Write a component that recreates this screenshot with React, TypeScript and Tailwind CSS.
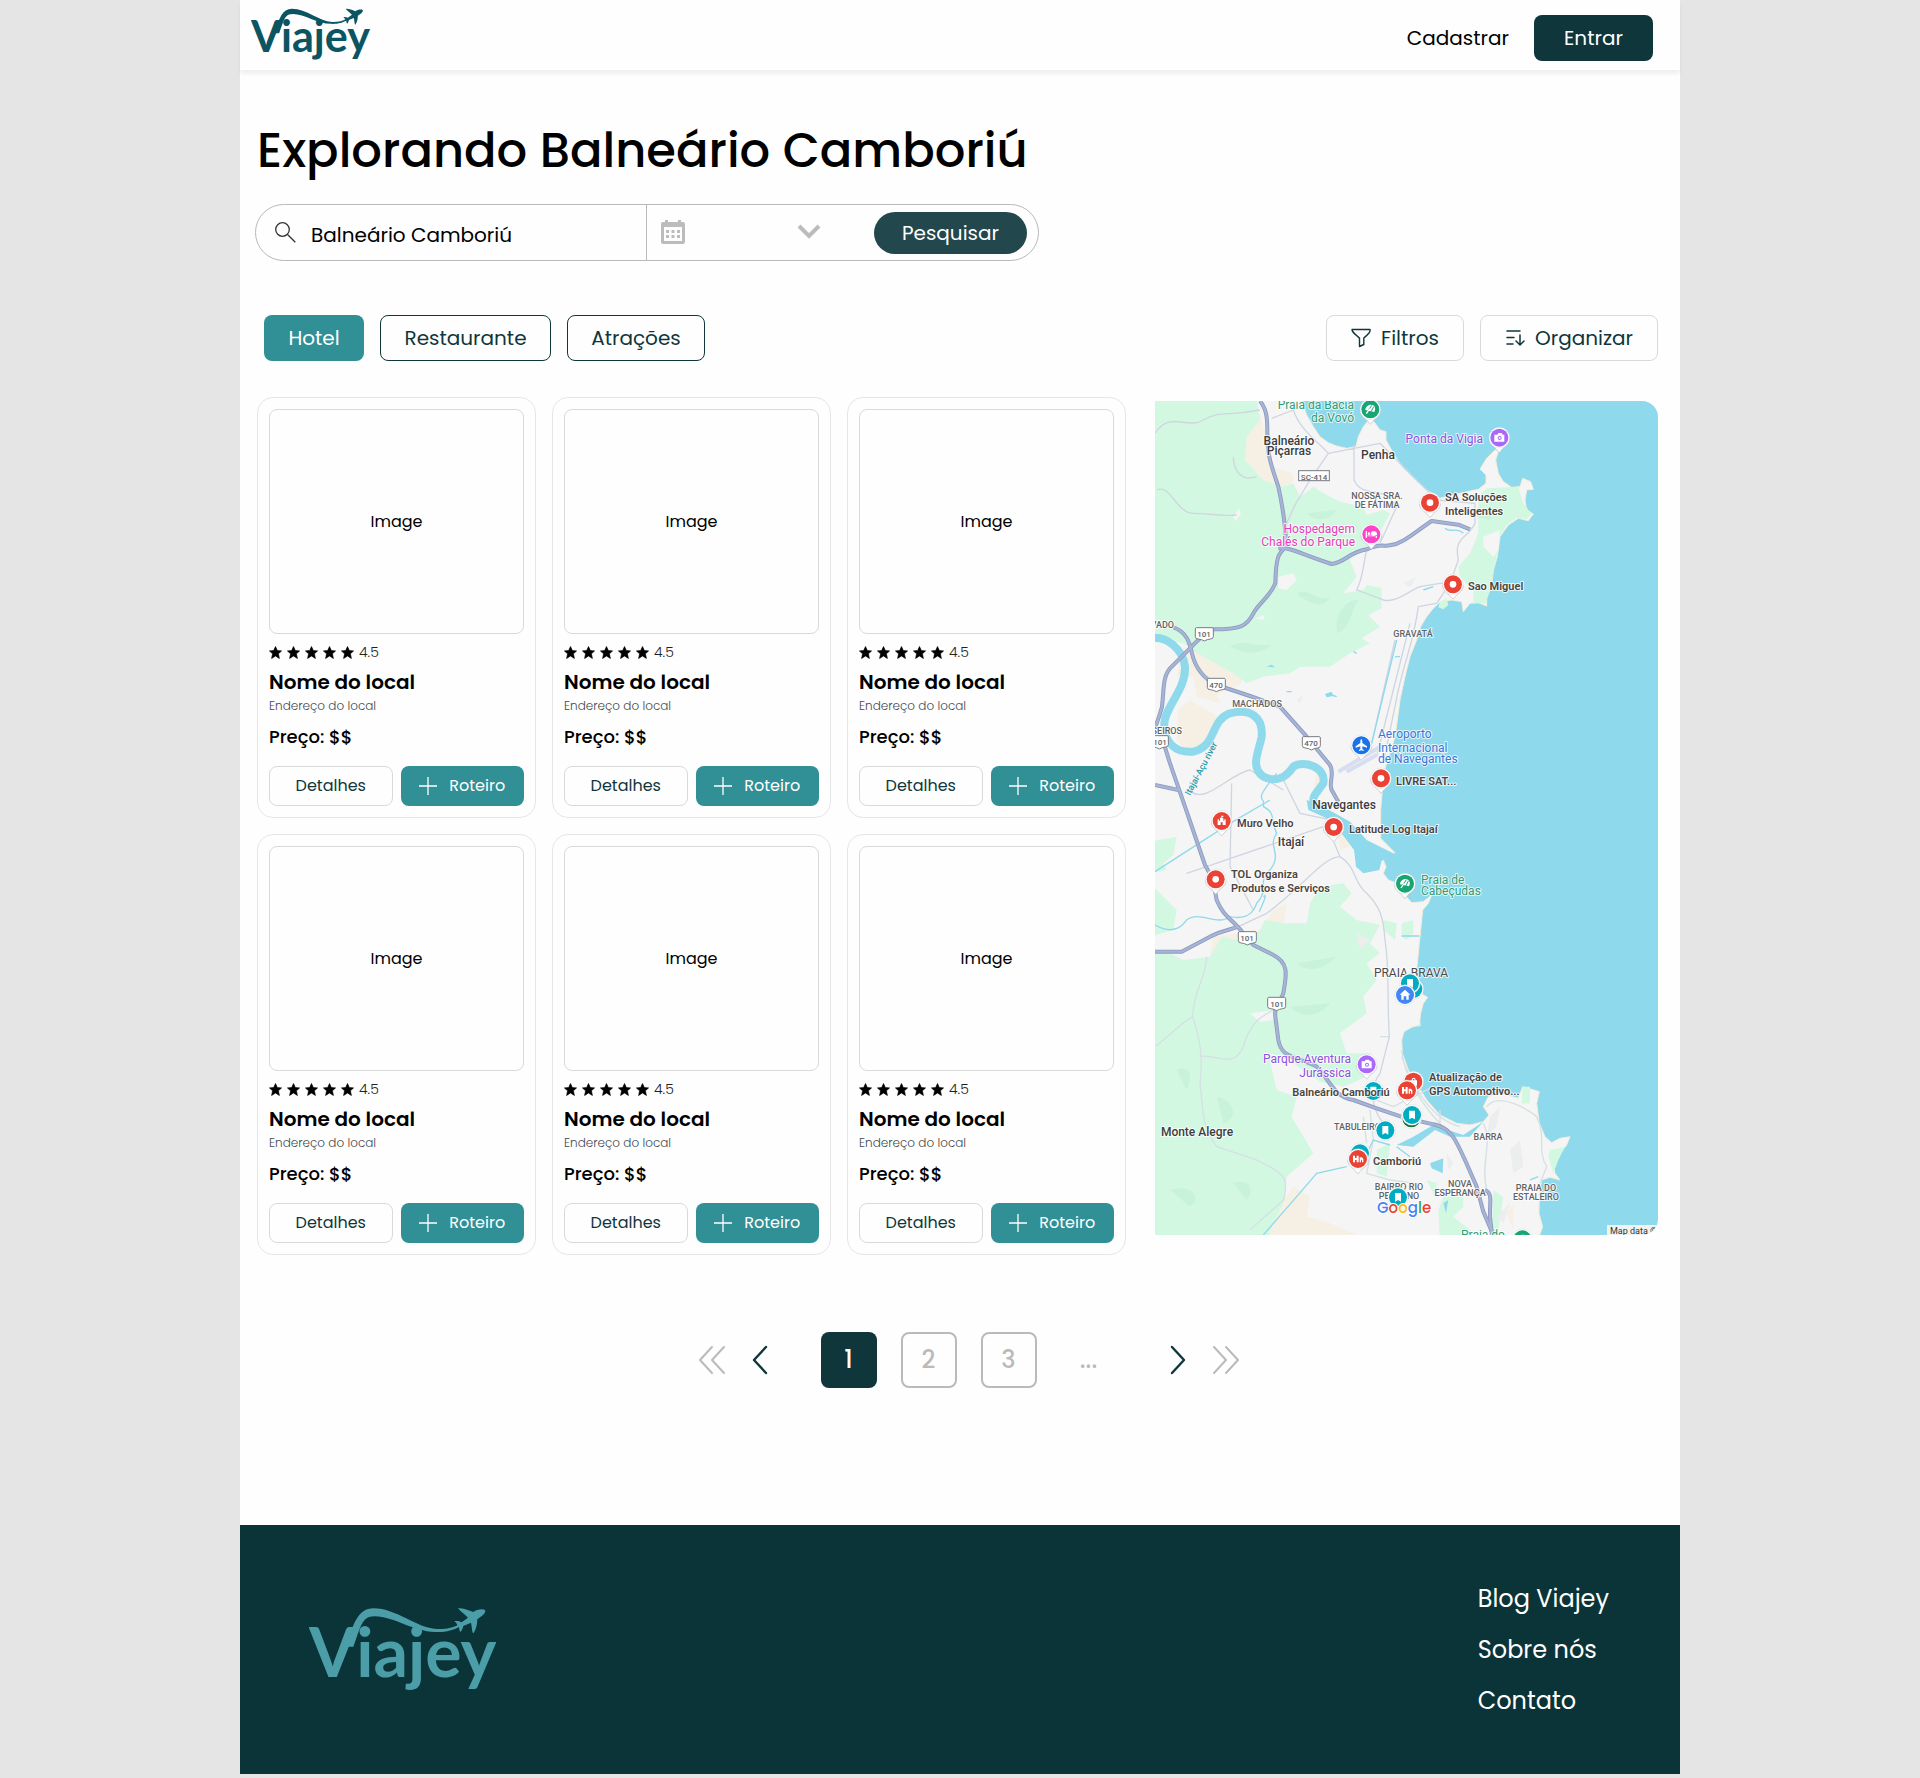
import React from "react";

const ui = "font-['Poppins','Inter',sans-serif]";

function Logo({ className }: { className: string }) {
  return (
    <svg viewBox="0 0 189 86" className={className} role="img" aria-label="Viajey" fill="currentColor">
      <text x="0" y="70" fontSize="68" fontWeight="700" fontFamily="Lato, sans-serif">
        Viajey
      </text>
      <g transform="scale(0.3333) translate(-57 -81)">
        <path d="M168 200C190 130 205 85 250 85C320 85 380 145 440 147C470 148 490 142 505 134L508 140C490 150 470 157 435 156C370 155 310 109 255 109C226 109 218 122 204 160L190 200Z" />
        <path d="M585 90C588 96 582 104 572 110L562 118C562 135 558 150 550 160C546 158 546 140 543 128L520 138C518 145 516 152 511 156C508 150 508 145 506 140L499 141L502 134C500 130 497 127 493 124C500 122 508 124 515 127L534 113C525 103 512 95 504 85C515 83 535 90 550 96C560 88 578 86 585 90Z" />
      </g>
    </svg>
  );
}

function Star() {
  return (
    <svg viewBox="0 0 12 12" className="size-[13px]" fill="#000" stroke="#000" strokeWidth="0.6" strokeLinejoin="round" aria-hidden="true">
      <path d="M6 0.500L7.700 4.200L11.600 4.500L8.700 7.200L9.600 11.500L6 9.200L2.400 11.500L3.300 7.200L0.400 4.500L4.300 4.200Z" />
    </svg>
  );
}

function PlaceCard() {
  return (
    <article className="flex flex-col rounded-2xl border border-[#e6e6e6] p-[11px]">
      <div className="flex h-[225px] items-center justify-center rounded-lg border border-[#d9d9d9] text-base text-black">
        Image
      </div>
      <div className="mt-2 flex h-5 items-center gap-[5px]">
        {[0, 1, 2, 3, 4].map((n) => (
          <Star key={n} />
        ))}
        <span className="text-sm leading-5 font-light text-[#222]">4.5</span>
      </div>
      <h2 className="mt-1.5 text-xl leading-7 font-semibold text-black">Nome do local</h2>
      <p className="mt-0.5 text-xs leading-4 font-light text-[#444a50]">Endereço do local</p>
      <p className="mt-[11px] text-lg leading-6 font-medium text-black">Preço: $$</p>
      <div className="mt-[17px] grid grid-cols-2 gap-2">
        <button className="h-10 rounded-lg border border-[#d9d9d9] text-base text-[#0f363b]">Detalhes</button>
        <button className="flex h-10 items-center justify-center gap-3 rounded-lg bg-[#318f96] text-base text-white">
          <svg viewBox="0 0 18 18" className="size-[18px]" stroke="currentColor" strokeWidth="1.3" aria-hidden="true">
            <path d="M9 0V18M0 9H18" />
          </svg>
          Roteiro
        </button>
      </div>
    </article>
  );
}

type Glyph = "dot" | "umbrella" | "bed" | "camera" | "plane" | "castle" | "bookmark" | "home" | "city" | "bag" | "none";

const glyphs: Record<Glyph, React.ReactNode> = {
  none: null,
  dot: <circle r="10" fill="#fff" />,
  umbrella: (
    <g fill="none" stroke="#fff" strokeWidth="4">
      <path d="M-15 2C-14 -10 -2 -17 9 -12C15 -8 16 0 12 8L-15 2Z" fill="#fff" stroke="none" />
      <path d="M-3 -3L-13 14M4 -12L-6 4M10 -8L3 6" stroke="#17a673" strokeWidth="3" />
      <path d="M-2 -2L-12 13" />
    </g>
  ),
  bed: (
    <g fill="#fff">
      <path d="M-17 -10H-13V4H13V-2C13 -5 11 -6 8 -6H-1V2H-13V10H-17ZM17 10H13V5H17ZM13 6H-15V3H17V-1C17 -6 14 -9 9 -9H1V3Z" />
      <circle cx="-7" cy="-2" r="4" />
    </g>
  ),
  camera: (
    <g>
      <path d="M-15 -9H-6L-3 -14H7L10 -9H15V12H-15Z" fill="#fff" />
      <circle cx="1" cy="1" r="6" fill="#a968f7" />
      <circle cx="1" cy="1" r="3" fill="#fff" />
    </g>
  ),
  plane: <path d="M0 -18C3 -18 3 -12 3 -7L17 3V7L3 3V11L7 14V17L0 15L-7 17V14L-3 11V3L-17 7V3L-3 -7C-3 -12 -3 -18 0 -18Z" fill="#fff" />,
  castle: <path d="M-12 12V-5H-8V-1H-5V-10H-1V-16H5V-12H1V-10H5V-1H8V-5H12V12H3V4H-3V12Z" fill="#fff" />,
  bookmark: <path d="M-9 -13H9V13L0 8L-9 13Z" fill="#fff" />,
  home: <path d="M0 -16L16 -1H11V14H4V4H-4V14H-11V-1H-16Z" fill="#fff" />,
  city: <path d="M-15 -10H-9V-3H-4V-10H2V10H-4V3H-9V10H-15ZM5 -5H12L16 0V10H12V2H9V10H5Z" fill="#fff" />,
  bag: <path d="M-9 -4H-5C-5 -14 7 -14 7 -4H11V12H-9ZM-2 -4H4C4 -9 -2 -9 -2 -4Z" fill="#fff" />,
};

type PinData = [number, number, string, Glyph, boolean];

const pinsBelowLabels: PinData[] = [[670, 2103, "#00acc1", "bookmark", false]];

const pins: PinData[] = [
  [661, 58, "#17a673", "umbrella", true],
  [664, 433, "#fb44c8", "bed", true],
  [1048, 143, "#a968f7", "camera", true],
  [840, 338, "#ea4335", "dot", true],
  [909, 583, "#ea4335", "dot", true],
  [634, 1066, "#1a73e8", "plane", true],
  [693, 1165, "#ea4335", "dot", true],
  [551, 1311, "#ea4335", "dot", true],
  [215, 1293, "#ea4335", "castle", true],
  [197, 1468, "#ea4335", "dot", true],
  [765, 1481, "#17a673", "umbrella", true],
  [790, 1797, "#00acc1", "none", false],
  [780, 1780, "#00acc1", "bookmark", false],
  [765, 1815, "#4285f4", "home", false],
  [650, 2023, "#a968f7", "camera", true],
  [790, 2075, "#ea4335", "bag", true],
  [771, 2101, "#ea4335", "city", true],
  [784, 2185, "#0d7033", "none", false],
  [786, 2175, "#00acc1", "bookmark", false],
  [706, 2221, "#00acc1", "bookmark", false],
  [630, 2290, "#00acc1", "none", false],
  [624, 2307, "#ea4335", "city", true],
  [744, 2422, "#00acc1", "bookmark", false],
  [1117, 2548, "#17a673", "umbrella", true],
];

function Pins({ items }: { items: PinData[] }) {
  return (
    <g transform="translate(-5 -11) scale(0.33333)">
      {items.map(([x, y, color, glyph, tail]) => (
        <g key={`${x}-${y}`} transform={`translate(${x} ${y})`}>
          {tail && <path d="M-31 4C-30 24 -12 26 -3 42Q0 46 3 42C12 26 30 24 31 4Z" fill="#fff" stroke="#b9bcc2" strokeWidth="2" />}
          <circle r="31" fill="#fff" stroke="#c9ccd1" strokeWidth="1" />
          <circle r="27" fill={color} />
          {glyphs[glyph]}
        </g>
      ))}
    </g>
  );
}

type Anchor = "start" | "middle" | "end";
// text, x, baseline, size, weight, colour, anchor
const labels: [string, number, number, number, number, string, Anchor][] = [
  ["Praia da Bacia", 612, 58, 12, 400, "#2f9d72", "end"],
  ["da Vovó", 612, 96, 12, 400, "#2f9d72", "end"],
  ["Balneário", 418, 164, 12, 500, "#3c3c3f", "middle"],
  ["Piçarras", 418, 196, 12, 500, "#3c3c3f", "middle"],
  ["Penha", 685, 208, 12, 500, "#3c3c3f", "middle"],
  ["NOSSA SRA.", 681, 326, 9, 500, "#5f6368", "middle"],
  ["DE FÁTIMA", 681, 353, 9, 500, "#5f6368", "middle"],
  ["Hospedagem", 616, 430, 12, 400, "#e93bbd", "end"],
  ["Chalés do Parque", 616, 467, 12, 400, "#e93bbd", "end"],
  ["Ponta da Vigia", 1000, 158, 12, 400, "#8f50e0", "end"],
  ["SA Soluções", 886, 332, 11, 600, "#4a4441", "start"],
  ["Inteligentes", 886, 374, 11, 600, "#4a4441", "start"],
  ["Sao Miguel", 955, 601, 11, 600, "#4a4441", "start"],
  ["GRAVATÁ", 788, 742, 9, 500, "#5f6368", "middle"],
  ["VADO", 72, 715, 9, 500, "#5f6368", "end"],
  ["MACHADOS", 320, 950, 9, 500, "#5f6368", "middle"],
  ["SEIROS", 97, 1032, 9, 500, "#5f6368", "end"],
  ["Aeroporto", 684, 1044, 12, 400, "#3a75d8", "start"],
  ["Internacional", 684, 1086, 12, 400, "#3a75d8", "start"],
  ["de Navegantes", 684, 1118, 12, 400, "#3a75d8", "start"],
  ["LIVRE SAT...", 739, 1186, 11, 600, "#4a4441", "start"],
  ["Navegantes", 582, 1256, 12, 500, "#3c3c3f", "middle"],
  ["Muro Velho", 262, 1310, 11, 600, "#4a4441", "start"],
  ["Latitude Log Itajaí", 598, 1329, 11, 600, "#4a4441", "start"],
  ["Itajaí", 423, 1368, 12, 500, "#3c3c3f", "middle"],
  ["TOL Organiza", 244, 1465, 11, 600, "#4a4441", "start"],
  ["Produtos e Serviços", 244, 1505, 11, 600, "#4a4441", "start"],
  ["Praia de", 814, 1483, 12, 400, "#2f9d72", "start"],
  ["Cabeçudas", 814, 1515, 12, 400, "#2f9d72", "start"],
  ["PRAIA BRAVA", 782, 1761, 12, 400, "#4a4a4d", "middle"],
  ["Parque Aventura", 603, 2020, 12, 400, "#8f50e0", "end"],
  ["Jurássica", 603, 2062, 12, 400, "#8f50e0", "end"],
  ["Balneário Camboriú", 572, 2118, 11, 600, "#4a4441", "middle"],
  ["Atualização de", 838, 2073, 11, 600, "#4a4441", "start"],
  ["GPS Automotivo...", 838, 2116, 11, 600, "#4a4441", "start"],
  ["TABULEIRO", 553, 2219, 9, 500, "#5f6368", "start"],
  ["BARRA", 1014, 2251, 9, 500, "#5f6368", "middle"],
  ["Monte Alegre", 142, 2238, 12, 500, "#3c3c3f", "middle"],
  ["Camboriú", 670, 2326, 11, 600, "#4a4441", "start"],
  ["BAIRRO RIO", 748, 2400, 9, 500, "#5f6368", "middle"],
  ["PEQUENO", 748, 2426, 9, 500, "#5f6368", "middle"],
  ["NOVA", 929, 2392, 9, 500, "#5f6368", "middle"],
  ["ESPERANÇA", 929, 2418, 9, 500, "#5f6368", "middle"],
  ["PRAIA DO", 1159, 2403, 9, 500, "#5f6368", "middle"],
  ["ESTALEIRO", 1159, 2430, 9, 500, "#5f6368", "middle"],
  ["Praia do", 934, 2546, 12, 400, "#2f9d72", "start"],
];

const highways = [
  "M330 33C352 60 352 90 352 130C352 200 365 230 385 290C400 360 408 410 408 470C385 490 378 500 376 580C360 620 325 640 310 670C290 710 270 718 190 718C160 730 140 755 120 775L60 835C38 860 42 900 36 950C28 980 20 1000 15 1015",
  "M385 475C420 470 450 492 545 522C590 515 590 490 650 478C690 460 700 470 720 466C760 460 790 430 845 393L925 404L960 418",
  "M70 712C110 725 120 760 126 790C135 830 160 865 200 885L300 918L390 950L470 1040L540 1125C555 1150 535 1180 545 1200L565 1235",
  "M15 1185L85 1200M35 1040L60 1120L105 1250L165 1425C180 1450 190 1470 200 1530C220 1580 250 1590 280 1630L310 1665L370 1695C420 1720 408 1760 400 1810C390 1840 372 1840 376 1880L385 1950C395 2010 450 2000 500 2030C540 2070 550 2120 610 2130L680 2155L760 2182L850 2203C910 2215 920 2260 945 2310L980 2390L1000 2465L1030 2535",
  "M15 1685H95L180 1640C220 1620 240 1620 265 1610",
  "M1005 2400C1030 2410 1018 2440 1020 2480L1026 2535",
];

const streets =
  "M15 130C60 60 110 120 160 90S230 80 330 60M320 260C260 280 250 220 250 200M20 300C60 280 80 370 130 370S220 380 260 375M365 85L430 60C450 120 500 150 535 190L690 160L760 230L860 330L975 340M410 400L435 345L480 270L535 190M612 165V270C640 330 700 280 740 350L690 460M650 480C640 520 640 560 620 600L700 630C740 640 780 600 810 590L870 580H900M975 340V400C950 450 910 440 925 510L900 580L860 640L805 650C790 760 770 790 745 900L700 1120M735 750L665 1060M780 700L730 900L680 1100M120 1200C160 1250 240 1150 300 1140L400 1200M245 1180L240 1430L310 1560M110 1450L520 1310M400 1170L450 1270L545 1290M545 1340L570 1400C620 1430 610 1480 650 1510C690 1550 700 1580 705 1650C720 1750 710 1800 718 1940L690 2050C660 2090 660 2150 700 2200M265 1610L350 1570C460 1490 520 1400 570 1400";

const lanes =
  "M170 1700C170 1760 130 1800 128 1880C150 1950 160 2000 150 2080C160 2150 150 2200 200 2270L320 2310C400 2350 420 2360 400 2430L300 2520M15 1970C80 1920 90 1900 128 1880M150 2000C200 1990 250 2040 280 1970C300 1900 330 1880 370 1860M690 1940H718M755 2000C790 2100 850 2190 930 2210M755 1980C760 2040 800 2140 900 2230M870 2210V2160M1000 2200C1030 2260 990 2320 1010 2400M1010 2150C1050 2100 1150 2170 1160 2180C1190 2240 1160 2280 1190 2330L1170 2380M660 2160L670 2250L650 2350L720 2370L800 2380M600 2100L730 2150L850 2090M640 2180L650 2260";

function MapView() {
  return (
    <svg viewBox="0 0 503 834" preserveAspectRatio="xMidYMid slice" className="h-full w-full" role="img" aria-label="Mapa da região">
      <rect width="503" height="834" fill="#8fd9ec" />
      <g transform="translate(-5 -11) scale(0.33333)">
        <path
          fill="#f5f5f5"
          stroke="#f6ecd8"
          strokeWidth="3"
          d="M0 20H450L470 75L490 110L510 140L535 158L560 168L590 175L618 170L625 140L640 110L655 92L672 95L690 120L708 125V150L730 190L760 235L790 265L830 300L870 325L920 312L985 298L1008 280V255L990 237L1010 205L1035 180H1047L1037 210L1045 250L1060 275L1085 292L1110 290L1118 265L1142 275L1150 298L1130 300L1125 330L1130 360L1150 372L1135 392L1105 385L1075 405L1050 440L1042 500L1030 540L1024 590L1010 625V648L985 638L960 640L940 665L935 635L905 630L870 636L850 655L830 680L812 710L800 750L780 800L765 860L750 930L742 990L735 1040L720 1090L700 1150L697 1200L692 1260V1345L735 1388L700 1410L708 1430L700 1450L715 1470L740 1480L760 1510L785 1538L820 1535L845 1515L835 1540L818 1560L812 1620L805 1690L800 1740V1790L820 1815L833 1822L820 1840L812 1870L808 1905L785 1912L762 1925L755 1950L757 1990L775 2040L800 2080L830 2130L870 2175L920 2200L960 2205L1000 2195L1017 2175L1000 2150L1015 2120L1050 2110L1105 2125L1118 2090L1168 2105L1160 2140L1168 2200L1185 2240L1205 2258L1230 2245L1260 2240L1250 2265L1230 2290L1210 2320L1215 2350L1230 2370L1200 2362L1175 2370L1168 2410L1167 2470L1178 2510L1160 2560H0Z"
        />
        <g fill="#f5f0e3">
          <path d="M330 70L290 140L285 210L340 270L395 292L430 275L428 250L365 230L350 150ZM100 770L180 800L280 850L275 880L200 915L210 940L140 920L130 860L80 860ZM120 930L205 980L180 1050L120 1090L80 1050L85 960ZM190 1640L330 1620L370 1560L410 1540L400 1600L300 1660L200 1700L180 1690ZM430 2390L480 2420L470 2480L540 2500L620 2535H350L370 2470Z" />
          <path d="M1070 2470L1090 2440V2520ZM560 1290L600 1320V1370L570 1380ZM500 1150L525 1160L515 1220L490 1200Z" />
        </g>
        <g fill="#d3f8e2">
          <path d="M0 20H320L330 90L290 140L285 210L340 270L395 290L430 280L450 320L490 290L520 310L570 335L640 350L650 375L700 360L720 370L690 430L640 480L600 510L620 560L580 610L640 600L650 585L695 595V655L655 675L690 710L635 745L660 760L600 790L540 830H450L420 850L340 860L290 880L250 850L150 795L100 760L0 745Z" />
          <path d="M0 1355L80 1340L70 1395L40 1420L50 1440L0 1450ZM0 1480L80 1560L70 1620L0 1640Z" />
          <path d="M0 1690L40 1680L100 1710L180 1700L215 1640L300 1660L330 1620L345 1590L400 1600L470 1600L480 1540L510 1490L580 1480L605 1510L570 1550L620 1590L690 1605L660 1660L690 1690L650 1720L680 1770L640 1820L650 1870L570 1930L590 1990L665 1990L650 2060L580 2090L510 2075L400 2000L355 1990L380 2100L440 2120L425 2180L490 2290L410 2360L405 2430L370 2500L345 2560H0ZM700 1590L740 1600L735 1650L700 1620ZM755 1600L790 1590V1630L770 1650L755 1640Z" />
          <path d="M985 320L1010 295L1105 290L1120 340L1145 372L1130 388L1100 383L1070 405L1048 440L1040 500L1024 580L1008 640H970V600L930 560L925 530L960 490L985 430ZM870 636L890 625L895 645L880 658L865 652Z" />
          <path d="M880 2420L940 2415V2450L910 2480L960 2520L970 2560H870L865 2460ZM1030 2400L1060 2420L1040 2560H1025ZM1118 2090H1140V2140L1115 2140ZM1200 2280L1245 2270L1225 2310L1210 2350L1195 2300ZM830 2370L860 2380L855 2420ZM680 2280L720 2260L710 2360L680 2350ZM800 1910L812 1895V1908Z" />
        </g>
        <path fill="#f5f5f5" d="M385 560L430 550L440 570L410 600L385 595ZM315 685L345 675L340 690ZM250 380L268 355L272 375L255 392ZM1000 440L1050 420L1045 480L1030 500L1000 470ZM300 1870L370 1860V1890L330 1895Z" />
        <g fill="#c9f2da">
          <path d="M440 610C480 590 500 640 540 620C520 660 470 640 440 610ZM560 690C580 640 600 630 625 630C600 670 600 720 560 730ZM240 770C280 740 330 780 370 760C330 800 280 790 240 770ZM470 370L560 360C540 390 500 400 470 370ZM440 1720L560 1700C520 1740 470 1750 440 1720ZM420 1850L540 1840C500 1890 450 1880 420 1850ZM80 2040C120 2020 130 2060 110 2100ZM200 2120C250 2130 270 2180 220 2200ZM60 2400C120 2380 160 2420 120 2450ZM250 2380C290 2360 320 2400 290 2430ZM980 380C1000 360 1040 370 1020 390Z" />
        </g>
        <g fill="#eceded">
          <path d="M1020 2180L1050 2150L1040 2210L1010 2240ZM1080 2280L1110 2250L1120 2330L1090 2350ZM620 1630L660 1650L630 1680ZM440 930L460 915L450 940ZM760 580L800 560L780 590ZM1040 2480L1080 2440L1060 2500ZM890 2290L910 2320L895 2340Z" />
        </g>
        <path d={lanes} fill="none" stroke="#d5e0e4" strokeWidth="4" strokeLinejoin="round" />
        <path d={streets} fill="none" stroke="#cfd5e1" strokeWidth="4" strokeLinejoin="round" />
        <path
          d="M0 745C50 735 100 780 105 830C108 900 45 950 43 1000C40 1060 80 1090 130 1085C200 1070 180 990 240 970C300 955 340 980 335 1040C325 1090 300 1130 340 1160C380 1180 410 1160 430 1130C460 1110 530 1130 520 1180C500 1210 480 1220 495 1250"
          fill="none"
          stroke="#8fd9ec"
          strokeWidth="24"
        />
        <path fill="#8fd9ec" d="M470 1230L520 1250L600 1295L650 1350L740 1395L695 1412L688 1440L640 1450L618 1430L612 1380L560 1310L530 1285L475 1260ZM840 2320L880 2305L878 2350L845 2335ZM880 2440L895 2430L888 2470ZM350 830L365 824L375 832ZM525 912L545 905L550 918L530 922ZM740 2265L790 2240L850 2205L940 2235L1000 2195L960 2240L900 2240L855 2220L790 2270Z" />
        <path
          d="M15 1445L240 1300L360 1230M15 1605C60 1630 90 1620 110 1590C150 1560 200 1610 240 1580C290 1590 310 1570 320 1540C360 1500 320 1470 360 1440C400 1390 350 1370 380 1330C360 1290 380 1270 340 1250C350 1210 300 1250 380 1150M340 2535L440 2420L500 2350L590 2330M755 1638H808M720 2265L670 2250L650 2290M740 2270L780 2300M610 785L620 790M410 905H425M735 800H750M545 915L560 920M740 750L665 1060M885 415C900 430 920 410 940 430M820 600L850 590M1140 2370L1165 2360M340 1520C360 1500 320 1580 330 1560"
          fill="none"
          stroke="#8fd9ec"
          strokeWidth="4"
        />
        <path d="M565 1145L700 1065M590 1145L680 1095" stroke="#d8def0" strokeWidth="12" />
        <g fill="none" strokeLinejoin="round">
          {highways.map((d) => (
            <path key={d} d={d} stroke="#8b9ac0" strokeWidth="12" />
          ))}
          {highways.map((d) => (
            <path key={d} d={d} stroke="#a7b4d5" strokeWidth="7" />
          ))}
        </g>
        <g fill="#fff" stroke="#777b82" strokeWidth="3">
          <rect x="446" y="242" width="92" height="30" />
          {[
            [163, 732],
            [199, 884],
            [484, 1059],
            [28, 1056],
            [292, 1644],
            [380, 1841],
          ].map(([x, y]) => (
            <path key={`${x}-${y}`} d="M-24 -19H24Q27 -19 27 -15V8Q27 15 18 15Q8 16 0 21Q-8 16 -18 15Q-27 15 -27 8V-15Q-27 -19 -24 -19Z" transform={`translate(${x} ${y})`} />
          ))}
        </g>
      </g>
      <Pins items={pinsBelowLabels} />
      <g fontFamily="Roboto, sans-serif">
        <g fontSize="8" fontWeight="500" fill="#5f6368" textAnchor="middle">
          <text x="159" y="79">SC-414</text>
          <text x="49" y="236">101</text>
          <text x="61" y="287">470</text>
          <text x="156" y="345">470</text>
          <text x="5" y="344">101</text>
          <text x="92" y="540">101</text>
          <text x="122" y="606">101</text>
        </g>
        <text fontSize="9" fontWeight="500" fill="#2b9aad" transform="translate(35 395) rotate(-62)">
          Itajaí-Açu river
        </text>
        {labels.map(([t, x, y, s, w, c, a]) => (
          <text
            key={t}
            x={Math.round(x / 3 - 5)}
            y={Math.round(y / 3 - 11)}
            fontSize={s}
            fontWeight={w}
            fill={c}
            textAnchor={a}
            stroke="#fff"
            strokeWidth="2"
            strokeOpacity="0.75"
            strokeLinejoin="round"
            paintOrder="stroke"
          >
            {t}
          </text>
        ))}
      </g>
      <Pins items={pins} />
      <text x="222" y="812" fontSize="15" fontWeight="500" stroke="#fff" strokeWidth="2" paintOrder="stroke">
        <tspan fill="#4285f4">G</tspan>
        <tspan fill="#ea4335">o</tspan>
        <tspan fill="#fbbc05">o</tspan>
        <tspan fill="#4285f4">g</tspan>
        <tspan fill="#34a853">l</tspan>
        <tspan fill="#ea4335">e</tspan>
      </text>
      <rect x="452" y="824" width="51" height="10" fill="#f0f3f4" />
      <text x="455" y="833" fontSize="9" fill="#333" fontFamily="Roboto, sans-serif">
        Map data ©
      </text>
    </svg>
  );
}

function Chevrons({ double, flip }: { double?: boolean; flip?: boolean }) {
  return (
    <svg
      viewBox={double ? "0 0 28 30" : "0 0 16 30"}
      className={`${double ? "w-7" : "w-4"} h-[30px] ${flip ? "rotate-180" : ""}`}
      fill="none"
      stroke="currentColor"
      strokeWidth={double ? 2 : 2.4}
      strokeLinecap="round"
      strokeLinejoin="round"
      aria-hidden="true"
    >
      <path d="M14 2L2 15L14 28" />
      {double && <path d="M26 2L14 15L26 28" />}
    </svg>
  );
}

export default function App() {
  return (
    <div className={`min-h-screen bg-[#e5e5e5] pb-1 ${ui}`}>
      <div className="mx-auto max-w-[1440px] bg-[#fefefe]">
        <header className="flex h-[70px] items-center justify-between pr-[27px] pl-[11px] shadow-[0_4px_4px_rgba(0,0,0,0.06)]">
          <a href="#inicio" aria-label="Viajey">
            <Logo className="w-[120px] text-[#0b5563]" />
          </a>
          <nav className="mt-1.5 flex items-center gap-[25px] text-xl">
            <a href="#cadastrar" className="text-black">
              Cadastrar
            </a>
            <button className="h-[46px] w-[119px] rounded-lg bg-[#0f363b] text-white">Entrar</button>
          </nav>
        </header>

        <main className="pt-[51px] pr-[22px] pb-[137px] pl-[17px]">
          <h1 className="text-5xl leading-[60px] font-medium text-black">Explorando Balneário Camboriú</h1>

          <form className="mt-[23px] -ml-0.5 flex h-[57px] w-full max-w-[784px] items-stretch rounded-full border border-[#b9b9b9] text-xl">
            <div className="flex w-1/2 items-center gap-[15px] border-r border-[#b9b9b9] pl-[19px]">
              <svg viewBox="0 0 21 21" className="size-[21px] shrink-0" fill="none" stroke="#333" strokeWidth="1.3" aria-hidden="true">
                <circle cx="7.5" cy="7.5" r="6.8" />
                <path d="M12.5 12.5L20.3 20.3" />
              </svg>
              <label htmlFor="destino" className="sr-only">
                Destino
              </label>
              <input id="destino" defaultValue="Balneário Camboriú" className="w-full bg-transparent pt-1 text-black outline-none" />
            </div>
            <div className="flex w-1/2 items-center justify-between pr-[11px] pl-3.5">
              <button type="button" aria-label="Escolher datas" className="flex w-40 items-center justify-between pb-0.5 text-[#bcbcbc]">
                <svg viewBox="0 0 24 24" className="size-6" fill="currentColor" aria-hidden="true">
                  <path d="M4 0H7V2H17V0H20V2H22Q24 2 24 4V22Q24 24 22 24H2Q0 24 0 22V4Q0 2 2 2H4ZM3 7V21H21V7Z" fillRule="evenodd" />
                  <path d="M5 10H8V13H5ZM10.500 10H13.500V13H10.500ZM16 10H19V13H16ZM5 15H8V18H5ZM10.500 15H13.500V18H10.500ZM16 15H19V18H16Z" />
                </svg>
                <svg viewBox="0 0 24 15" className="w-6" fill="none" stroke="currentColor" strokeWidth="4" aria-hidden="true">
                  <path d="M2 2L12 12L22 2" />
                </svg>
              </button>
              <button type="button" className="h-[42px] rounded-full bg-[#22474c] px-7 text-white">
                Pesquisar
              </button>
            </div>
          </form>

          <div className="mt-[54px] flex items-center justify-between pl-[7px] text-xl">
            <div className="flex gap-4">
              <button className="h-[46px] w-[100px] rounded-lg bg-[#318f96] text-white">Hotel</button>
              <button className="h-[46px] w-[171px] rounded-lg border border-[#0f363b] text-[#0f363b]">Restaurante</button>
              <button className="h-[46px] w-[138px] rounded-lg border border-[#0f363b] text-[#0f363b]">Atrações</button>
            </div>
            <div className="flex gap-4 text-[#0f363b]">
              <button className="flex h-[46px] items-center justify-center gap-2.5 rounded-lg border border-[#d9d9d9] px-6">
                <svg viewBox="0 0 20 20" className="size-5" fill="none" stroke="currentColor" strokeWidth="1.4" strokeLinejoin="round" aria-hidden="true">
                  <path d="M1 1.500H19C19.500 4 18 5.500 12.800 10V16.500L8.500 18.500V10C3 5.500 1 4 1 1.500Z" />
                </svg>
                Filtros
              </button>
              <button className="flex h-[46px] items-center justify-center gap-2.5 rounded-lg border border-[#d9d9d9] px-6">
                <svg viewBox="0 0 20 20" className="size-5" fill="none" stroke="currentColor" strokeWidth="1.5" strokeLinecap="round" strokeLinejoin="round" aria-hidden="true">
                  <path d="M2 3H15M2 9.500H9M2 16H8M15 7V17M11 13L15 17L19 13" />
                </svg>
                Organizar
              </button>
            </div>
          </div>

          <div className="mt-9 grid grid-cols-[minmax(0,869fr)_minmax(0,503fr)] gap-[29px]">
            <section className="grid grid-cols-3 gap-4">
              {[0, 1, 2, 3, 4, 5].map((n) => (
                <PlaceCard key={n} />
              ))}
            </section>
            <section className="mt-1 mb-5 overflow-hidden rounded-r-2xl">
              <MapView />
            </section>
          </div>

          <nav aria-label="Paginação" className="mt-[77px] flex items-center justify-center pl-[22px] text-2xl font-medium text-[#bababa]">
            <button aria-label="Primeira página">
              <Chevrons double />
            </button>
            <button aria-label="Página anterior" className="ml-[26px] text-[#0f363b]">
              <Chevrons />
            </button>
            <div className="mx-[53px] flex items-center gap-6">
              <button className="size-14 rounded-lg bg-[#0f363b] text-white">1</button>
              <button className="size-14 rounded-lg border-2 border-[#bababa]">2</button>
              <button className="size-14 rounded-lg border-2 border-[#bababa]">3</button>
              <span className="w-14 text-center">...</span>
            </div>
            <button aria-label="Próxima página" className="text-[#0f363b]">
              <Chevrons flip />
            </button>
            <button aria-label="Última página" className="ml-[26px]">
              <Chevrons double flip />
            </button>
          </nav>
        </main>

        <footer className="flex items-start justify-between bg-[#0a3438] pt-[55px] pr-[71px] pb-[55px] pl-[69px]">
          <Logo className="mt-[27px] w-[189px] text-[#4b9ea8]" />
          <nav className="flex flex-col gap-[15px] pt-px text-2xl leading-9 text-white">
            <a href="#blog">Blog Viajey</a>
            <a href="#sobre">Sobre nós</a>
            <a href="#contato">Contato</a>
          </nav>
        </footer>
      </div>
    </div>
  );
}
